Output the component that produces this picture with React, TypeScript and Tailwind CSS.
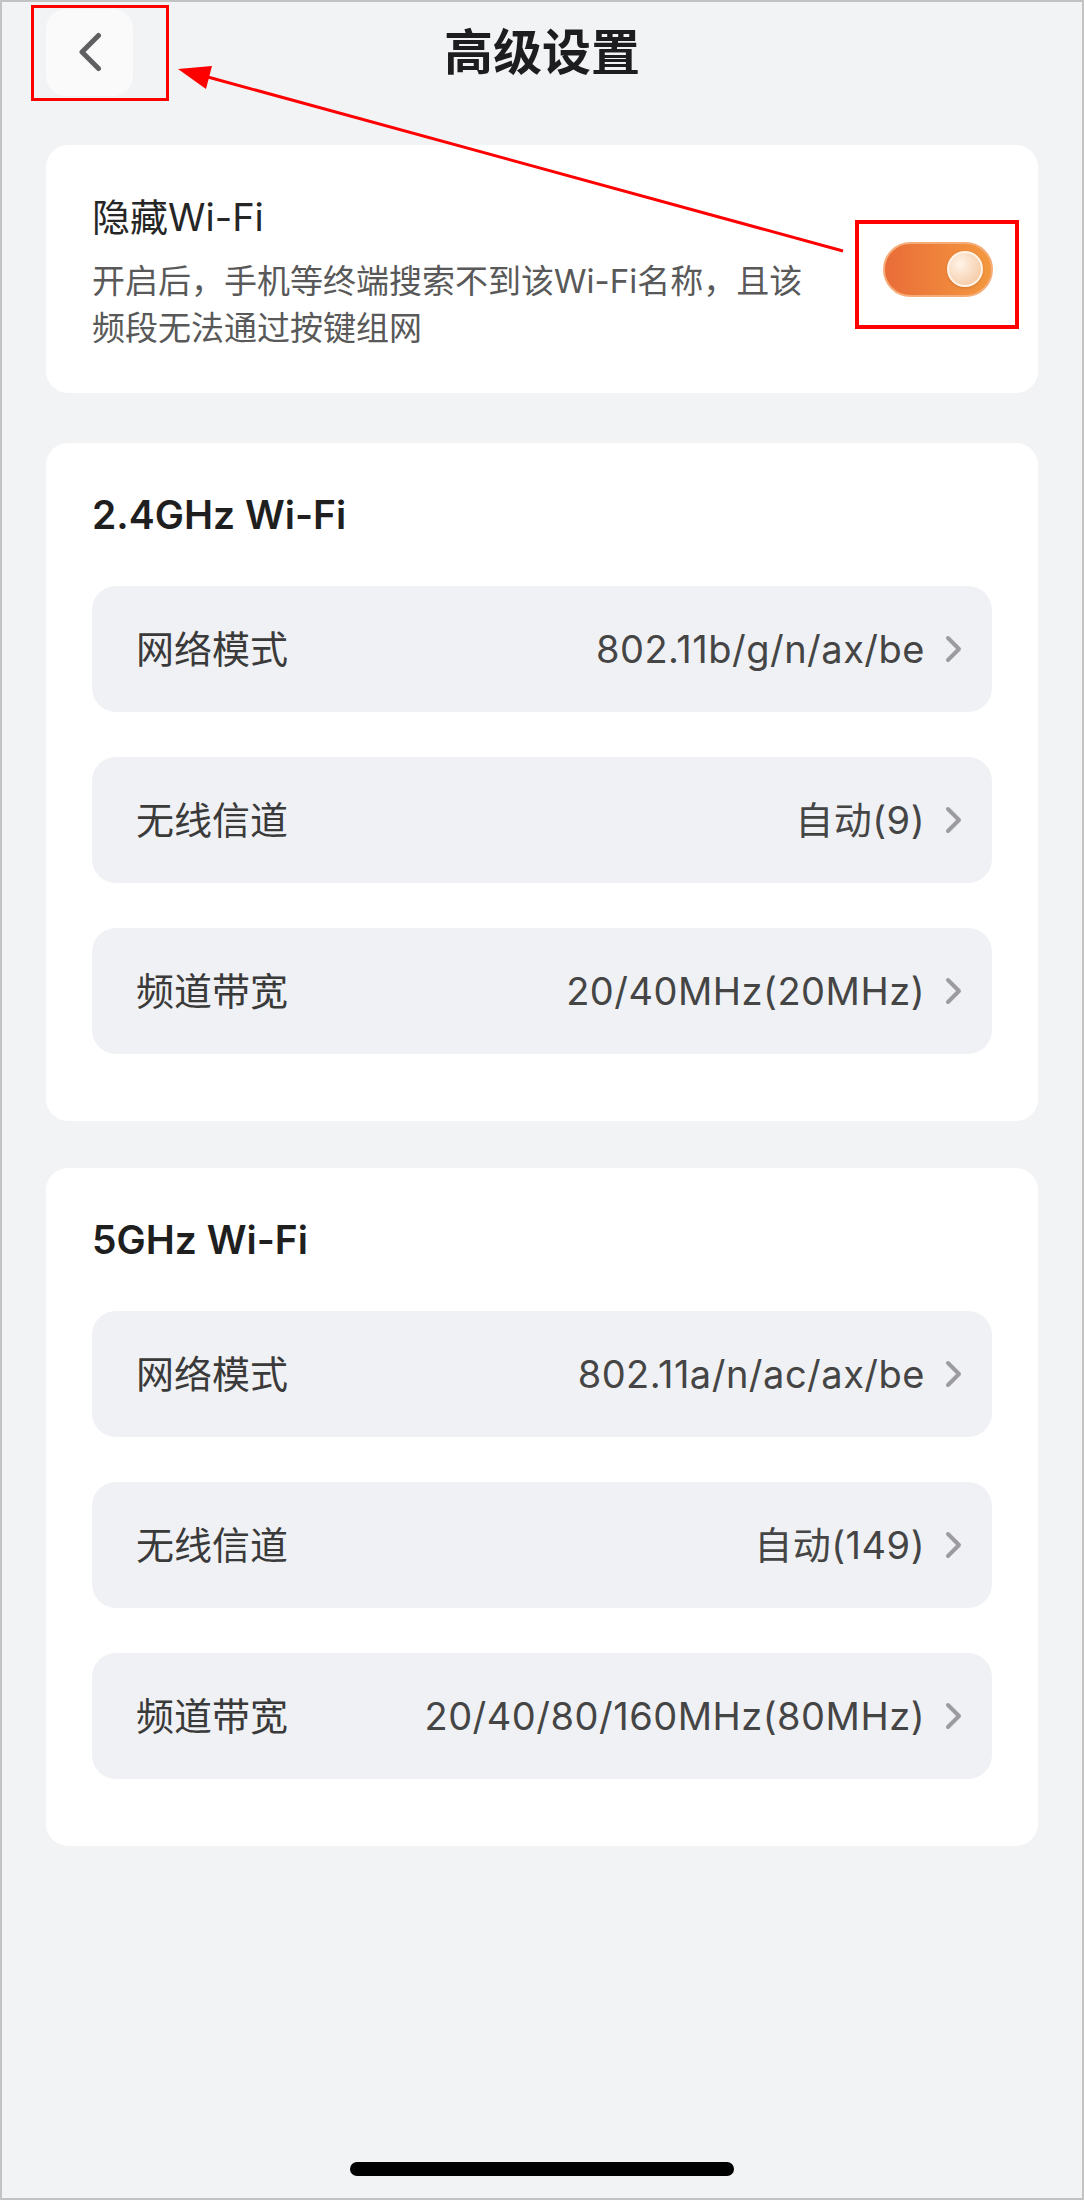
interface SettingRowProps {
  label: string;
  value: string;
}

const RowChevron = () => (
  <svg width="17" height="28" viewBox="0 0 17 28" fill="none" className="shrink-0">
    <path d="M3 3 L14 14 L3 25" stroke="#9c9ca0" strokeWidth="4" strokeLinecap="round" strokeLinejoin="round" />
  </svg>
);

const SettingRow: React.FC<SettingRowProps> = ({ label, value }) => (
  <div className="flex h-[126px] items-center justify-between rounded-[24px] bg-[#f0f1f4] pl-[44px] pr-[30px]">
    <span className="text-[38px] text-[#3a3a3a]">{label}</span>
    <div className="flex items-center gap-[20px]">
      <span className="text-[38px] tracking-[0.5px] text-[#454545]">{value}</span>
      <RowChevron />
    </div>
  </div>
);

interface BandCardProps {
  title: string;
  rows: SettingRowProps[];
  className?: string;
}

const BandCard: React.FC<BandCardProps> = ({ title, rows, className }) => (
  <section className={`mx-[44px] rounded-[22px] bg-white px-[46px] pt-[48px] pb-[67px] ${className ?? ""}`}>
    <h2 className="text-[39px] font-semibold leading-[48px] text-[#1f1f1f]">{title}</h2>
    <div className="mt-[47px] flex flex-col gap-[45px]">
      {rows.map((row) => (
        <SettingRow key={row.label} label={row.label} value={row.value} />
      ))}
    </div>
  </section>
);

const band24: SettingRowProps[] = [
  { label: "网络模式", value: "802.11b/g/n/ax/be" },
  { label: "无线信道", value: "自动(9)" },
  { label: "频道带宽", value: "20/40MHz(20MHz)" },
];

const band5: SettingRowProps[] = [
  { label: "网络模式", value: "802.11a/n/ac/ax/be" },
  { label: "无线信道", value: "自动(149)" },
  { label: "频道带宽", value: "20/40/80/160MHz(80MHz)" },
];

export default function App() {
  return (
    <div className="relative flex h-[2200px] w-[1084px] flex-col border-2 border-[#c3c3c3] bg-[#f2f3f5] font-[Inter,'Noto_Sans_CJK_SC',sans-serif]">
      {/* top bar */}
      <header className="grid h-[100px] grid-cols-[1fr_auto_1fr] items-center">
        <div className="pl-[44px]">
          <button className="flex h-[87px] w-[87px] items-center justify-center rounded-[20px] bg-white/60">
            <svg width="26" height="40" viewBox="0 0 26 40" fill="none">
              <path d="M21.5 3.5 L5 20 L21.5 36.5" stroke="#5f5f62" strokeWidth="5" strokeLinecap="round" strokeLinejoin="round" />
            </svg>
          </button>
        </div>
        <h1 className="text-[49px] font-bold leading-none text-[#1d1d1f]">高级设置</h1>
        <div />
      </header>

      {/* hidden wifi */}
      <div className="mx-[44px] mt-[43px] flex items-center justify-between rounded-[22px] bg-white pl-[46px] pr-[45px]">
        <div className="pt-[48px] pb-[41px]">
          <div className="text-[38px] leading-[48px] text-[#262626]">隐藏Wi-Fi</div>
          <p className="mt-[17px] text-[33px] leading-[47px] text-[#595959]">
            开启后，手机等终端搜索不到该Wi-Fi名称，且该
            <br />
            频段无法通过按键组网
          </p>
        </div>
        <div className="flex h-[55px] w-[110px] shrink-0 items-center justify-end rounded-full border-2 border-[#f5ac78] bg-linear-to-r from-[#e96c38] to-[#f3983f] pr-[8px]">
          <div className="h-[36px] w-[36px] rounded-full border-2 border-[#fff3e8] bg-[radial-gradient(circle_at_35%_35%,#fff4e9,#f2c096)] shadow-[0_1px_3px_rgba(0,0,0,0.15)]" />
        </div>
      </div>

      <BandCard title="2.4GHz Wi-Fi" rows={band24} className="mt-[50px]" />
      <BandCard title="5GHz Wi-Fi" rows={band5} className="mt-[47px]" />

      <div className="mx-auto mt-auto mb-[22px] h-[14px] w-[384px] rounded-full bg-black" />

      {/* red annotation marks */}
      <svg
        className="pointer-events-none absolute left-[-2px] top-[-2px]"
        width="1084"
        height="2200"
        viewBox="0 0 1084 2200"
        fill="none"
      >
        <rect x="32.5" y="6.5" width="135" height="93" stroke="#ff0000" strokeWidth="3" />
        <rect x="857" y="222" width="160" height="105" stroke="#ff0000" strokeWidth="4" />
        <line x1="843" y1="251" x2="206" y2="76.5" stroke="#ff0000" strokeWidth="3" />
        <polygon points="178,69 212,66 206,89" fill="#ff0000" />
      </svg>
    </div>
  );
}
